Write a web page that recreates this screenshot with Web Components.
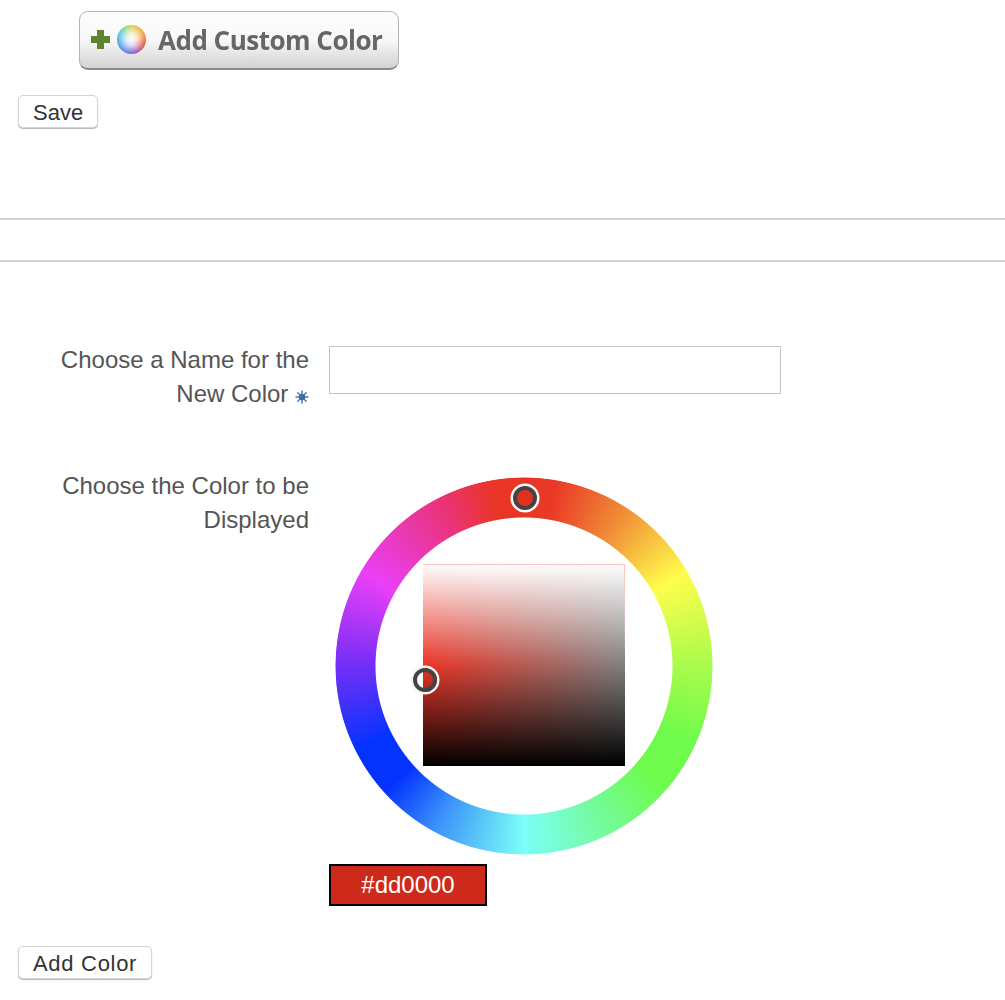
<!DOCTYPE html>
<html lang="en">
<head>
<meta charset="utf-8">
<title>Add Custom Color</title>
<style>
    body {
        margin: 0;
        background: #fff;
        font-family: "Liberation Sans", Arial, sans-serif;
    }
</style>
</head>
<body>
<color-page></color-page>

<script>
class ImageButton extends HTMLElement {
    constructor() {
        super();
        this.attachShadow({ mode: 'open' });
        this.shadowRoot.innerHTML = `
            <style>
                :host {
                    display: flex;
                    box-sizing: border-box;
                    width: 320px;
                    height: 59px;
                    align-items: center;
                    padding: 0 0 2px 11px;
                    border: 1px solid #b4b4b4;
                    border-bottom: 2px solid #8a8a8a;
                    border-radius: 9px;
                    background: linear-gradient(#fefefe 0%, #f8f8f8 50%, #d2d2d2 100%);
                }
                svg {
                    flex: none;
                    filter: blur(0.5px);
                }
                .orb {
                    flex: none;
                    width: 29px;
                    height: 29px;
                    margin-left: 7px;
                    border-radius: 50%;
                    background:
                        radial-gradient(circle, #fff 0, rgba(255,255,255,0.75) 30%, rgba(255,255,255,0) 72%),
                        conic-gradient(#d8cf4a, #f0a030 60deg, #e0503c 110deg, #8a50c8 165deg, #4f7fe8 215deg, #45aef0 270deg, #5cc8c8 310deg, #a0d860 340deg, #d8cf4a);
                    filter: blur(0.5px);
                }
                span {
                    margin: 2px 0 0 12px;
                    font: bold 26px "Open Sans", sans-serif;
                    letter-spacing: -0.5px;
                    color: #666;
                    filter: blur(0.6px);
                    white-space: nowrap;
                }
            </style>
            <svg width="19" height="19" viewBox="0 0 19 19">
                <path d="M6 0h7v6h6v7h-6v6H6v-6H0V6h6z" fill="#5f8430"/>
            </svg>
            <div class="orb"></div>
            <span><slot></slot></span>
        `;
    }
}

class PlainButton extends HTMLElement {
    constructor() {
        super();
        this.attachShadow({ mode: 'open' });
        this.shadowRoot.innerHTML = `
            <style>
                :host {
                    display: block;
                    width: fit-content;
                }
                button {
                    display: block;
                    box-sizing: border-box;
                    height: 33px;
                    padding: 2px 14px 0;
                    border: 1px solid #d4d4d4;
                    border-radius: 5px;
                    background: #fff;
                    box-shadow: 0 1px 1px #b5b5b5;
                    color: #333;
                    font: 22px "Liberation Sans", Arial, sans-serif;
                    letter-spacing: var(--track, 0);
                }
            </style>
            <button type="button"><slot></slot></button>
        `;
    }
}

class FormRow extends HTMLElement {
    constructor() {
        super();
        this.attachShadow({ mode: 'open' });
        this.shadowRoot.innerHTML = `
            <style>
                :host {
                    display: grid;
                    grid-template-columns: 309px 1fr;
                    column-gap: 20px;
                    align-items: start;
                }
                .label {
                    text-align: right;
                    color: #555;
                    font-size: 24px;
                    line-height: 34px;
                }
            </style>
            <div class="label"><slot name="label"></slot></div>
            <div><slot></slot></div>
        `;
    }
}

class RequiredMark extends HTMLElement {
    constructor() {
        super();
        this.attachShadow({ mode: 'open' });
        this.shadowRoot.innerHTML = `
            <style>
                :host {
                    display: inline-block;
                    width: 14px;
                    height: 14px;
                    vertical-align: -2px;
                }
                svg {
                    display: block;
                }
            </style>
            <svg width="14" height="14" viewBox="0 0 14 14" stroke="#4a7db0" stroke-width="1.5" stroke-linecap="round">
                <path d="M7 1v12M1 7h12M2.8 2.8l8.4 8.4M11.2 2.8l-8.4 8.4"/>
                <circle cx="7" cy="7" r="3.2" fill="#3a6ea5" stroke="none"/>
            </svg>
        `;
    }
}

class ColorWheel extends HTMLElement {
    constructor() {
        super();
        this.attachShadow({ mode: 'open' });
        this.shadowRoot.innerHTML = `
            <style>
                :host {
                    display: grid;
                    position: relative;
                    width: 378px;
                    height: 378px;
                    place-items: center;
                }
                .ring {
                    grid-area: 1 / 1;
                    width: 100%;
                    height: 100%;
                    border-radius: 50%;
                    background: conic-gradient(#ea3526 0deg, #ea3a26 10deg, #f08a35 32deg, #fffd4d 60deg, #a9fb4b 90deg, #6efb4b 115deg, #6efb4b 130deg, #75fba0 155deg, #7bfff8 180deg, #3c95f8 208deg, #0433ff 228deg, #0433ff 243deg, #7a2ff7 272deg, #ea3ff7 300deg, #ea3378 333deg, #ea3526 350deg, #ea3526 360deg);
                    -webkit-mask: radial-gradient(circle, transparent 148px, #000 149px, #000 188px, transparent 189px);
                    mask: radial-gradient(circle, transparent 148px, #000 149px, #000 188px, transparent 189px);
                }
                .square {
                    grid-area: 1 / 1;
                    width: 202px;
                    height: 202px;
                    margin-top: -2px;
                    background:
                        linear-gradient(#fbc4bf, #fbc4bf) top / 100% 1px no-repeat,
                        linear-gradient(#fbc4bf, rgba(251,196,191,0) 45%) right / 1px 100% no-repeat,
                        linear-gradient(#fff 0%, rgba(255,255,255,0) 50%, rgba(0,0,0,0) 50%, #000 100%),
                        linear-gradient(to right, rgba(128,128,128,0), #808080),
                        #ea3526;
                }
                .marker {
                    position: absolute;
                    box-sizing: border-box;
                    width: 24px;
                    height: 24px;
                    border: 4px solid #444;
                    border-radius: 50%;
                    box-shadow: 0 0 0 2.5px #f7f7f7;
                    filter: blur(0.7px);
                }
                .hue {
                    left: 178px;
                    top: 9px;
                    background: #e2301f;
                }
                .shade {
                    left: 78px;
                    top: 191px;
                }
            </style>
            <div class="ring"></div>
            <div class="square"></div>
            <div class="marker hue"></div>
            <div class="marker shade"></div>
        `;
    }
}

class HexSwatch extends HTMLElement {
    constructor() {
        super();
        this.attachShadow({ mode: 'open' });
        this.shadowRoot.innerHTML = `
            <style>
                :host {
                    display: flex;
                    box-sizing: border-box;
                    width: 158px;
                    height: 42px;
                    align-items: center;
                    justify-content: center;
                    border: 2px solid #000;
                    background: #cd2a1b;
                    color: #fff;
                    font-size: 24px;
                }
            </style>
            <slot></slot>
        `;
    }
}

class ColorPage extends HTMLElement {
    constructor() {
        super();
        this.attachShadow({ mode: 'open' });
        this.shadowRoot.innerHTML = `
            <style>
                :host {
                    display: block;
                    padding-top: 11px;
                    height: 989px;
                }
                .custom {
                    margin-left: 79px;
                }
                .save {
                    margin: 25px 0 0 18px;
                }
                .rule {
                    height: 2px;
                    background: #d2d2d2;
                }
                .rule.first {
                    margin-top: 90px;
                }
                .rule.second {
                    margin-top: 40px;
                }
                .name-row {
                    margin-top: 81px;
                }
                .wheel-row {
                    margin-top: 58px;
                }
                .name-input {
                    display: block;
                    box-sizing: border-box;
                    width: 452px;
                    height: 48px;
                    margin-top: 3px;
                    border: 1px solid #c4c4c4;
                    background: #fff;
                }
                color-wheel {
                    margin: 8px 0 0 6px;
                }
                hex-swatch {
                    margin-top: 9px;
                }
                .add {
                    margin: 40px 0 0 18px;
                    --track: 0.7px;
                }
            </style>
            <image-button class="custom">Add Custom Color</image-button>
            <div class="save"><plain-button>Save</plain-button></div>
            <div class="rule first"></div>
            <div class="rule second"></div>
            <form-row class="name-row">
                <span slot="label">Choose a Name for the<br>New Color <required-mark></required-mark></span>
                <input class="name-input" type="text">
            </form-row>
            <form-row class="wheel-row">
                <span slot="label">Choose the Color to be<br>Displayed</span>
                <color-wheel></color-wheel>
                <hex-swatch>#dd0000</hex-swatch>
            </form-row>
            <div class="add"><plain-button>Add Color</plain-button></div>
        `;
    }
}

customElements.define('image-button', ImageButton);
customElements.define('plain-button', PlainButton);
customElements.define('form-row', FormRow);
customElements.define('required-mark', RequiredMark);
customElements.define('color-wheel', ColorWheel);
customElements.define('hex-swatch', HexSwatch);
customElements.define('color-page', ColorPage);
</script>
</body>
</html>
